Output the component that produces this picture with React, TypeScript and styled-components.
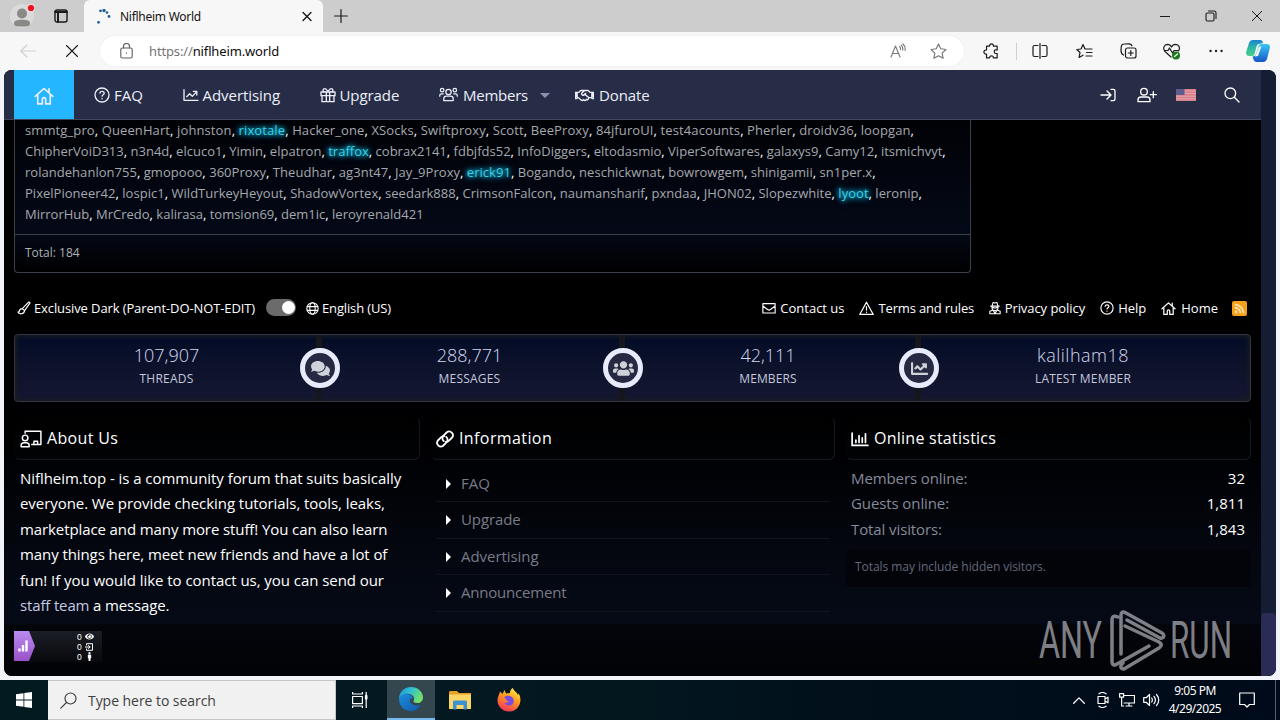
import React from 'react';
import styled, { createGlobalStyle } from 'styled-components';
import {
  FaChartLine,
  FaComments,
  FaEye,
  FaMale,
  FaRegHandshake,
  FaRss,
  FaUsers,
} from 'react-icons/fa';

const GlobalStyle = createGlobalStyle`
  * {
    box-sizing: border-box;
  }

  body {
    margin: 0;
    overflow: hidden;
    background: #f3f4fa;
    font-family: 'Open Sans', 'Noto Sans', sans-serif;
  }
`;

const Screen = styled.div`
  width: 1280px;
  height: 720px;
  display: flex;
  flex-direction: column;
`;

/* ---------- shared ---------- */

const Svg = styled.svg<{ $w?: number; $h?: number; $stroke?: number }>`
  width: ${p => p.$w || 16}px;
  height: ${p => p.$h || p.$w || 16}px;
  flex: none;
  display: block;
  fill: none;
  stroke: currentColor;
  stroke-width: ${p => p.$stroke || 2};
  stroke-linecap: round;
  stroke-linejoin: round;
`;

const Label = styled.span<{ $spacing?: number }>`
  white-space: nowrap;
  letter-spacing: ${p => p.$spacing || 0}px;
`;

const Slot = styled.div<{ $w: number; $color?: string }>`
  width: ${p => p.$w}px;
  height: 100%;
  flex: none;
  display: flex;
  align-items: center;
  justify-content: center;
  color: ${p => p.$color || '#1b1b1b'};
`;

const Spacer = styled.div`
  flex: 1;
`;

/* ---------- icons ---------- */

type IconProps = { size?: number };

const HomeIcon = ({ size = 16 }: IconProps) => (
  <Svg viewBox="0 0 24 24" $w={size}>
    <path d="M1.5 12.5 12 3l10.5 9.5M4.5 11v10.5H10V16a2 2 0 0 1 4 0v5.5h5.5V11M18 3.5v4" />
  </Svg>
);

const QuestionIcon = ({ size = 16 }: IconProps) => (
  <Svg viewBox="0 0 24 24" $w={size}>
    <circle cx="12" cy="12" r="10.5" />
    <path d="M8.8 9.2c.3-1.8 1.5-2.7 3.2-2.7 1.9 0 3.3 1 3.3 2.8 0 2.2-3.2 2.3-3.2 4.4M12 17.2v.4" />
  </Svg>
);

const ChartIcon = ({ size = 16 }: IconProps) => (
  <Svg viewBox="0 0 24 24" $w={size}>
    <path d="M1.5 4v16h21M5.5 14.5l4.5-4.5 4 4 6.5-7M15.5 6.5h5.2V12" />
  </Svg>
);

const GiftIcon = ({ size = 16 }: IconProps) => (
  <Svg viewBox="0 0 24 24" $w={size}>
    <path d="M1.5 7.5h21V13h-21zM3 13v9h18v-9M9.5 7.5V22M14.5 7.5V22M12 7.5C10 3 7.5 1.5 5.5 3s-.5 4.5 2 4.5M12 7.5C14 3 16.5 1.5 18.5 3s.5 4.5-2 4.5" />
  </Svg>
);

const GroupIcon = ({ size = 19 }: IconProps) => (
  <Svg viewBox="0 0 30 24" $w={size} $h={size * 0.8}>
    <circle cx="15" cy="8" r="4.2" />
    <circle cx="5" cy="5" r="2.8" />
    <circle cx="25" cy="5" r="2.8" />
    <path d="M7.5 21.5V19c0-3 2-4.5 4.5-4.5h6c2.5 0 4.5 1.500 4.500 4.500v2.500zM1.200 14.500v-1c0-1.700 1-2.700 2.800-2.700h2.800M28.800 14.500v-1c0-1.700-1-2.700-2.800-2.700h-2.800" />
  </Svg>
);

const LoginIcon = () => (
  <Svg viewBox="0 0 24 24" $w={16}>
    <path d="M1.5 12H16M10.500 6l6 6-6 6M16.500 3.500H20A2.500 2.500 0 0 1 22.500 6v12a2.500 2.500 0 0 1-2.500 2.500h-3.500" />
  </Svg>
);

const UserPlusIcon = () => (
  <Svg viewBox="0 0 30 24" $w={20} $h={16}>
    <circle cx="10.5" cy="7" r="5" />
    <path d="M1.5 22v-2.500c0-3 2-4.500 4.500-4.500h9c2.500 0 4.500 1.500 4.500 4.500V22zM24.500 7v9M20 11.500h9" />
  </Svg>
);

const SearchIcon = () => (
  <Svg viewBox="0 0 24 24" $w={16}>
    <circle cx="9.5" cy="9.5" r="8" />
    <path d="m15.500 15.500 7 7" />
  </Svg>
);

const FlagIcon = () => (
  <Svg viewBox="0 0 20 12" $w={20} $h={12}>
    <g stroke="none">
      <path fill="#d9808c" d="M0 0h20v12H0z" />
      <path fill="#e3a3ae" d="M8 1.500h12v1H8zM8 4h12v1H8zM0 6.800h20v1H0zM0 9.300h20v1H0z" />
      <path fill="#5d5c8c" d="M0 0h8.500v6H0z" />
    </g>
  </Svg>
);

const BrushIcon = () => (
  <Svg viewBox="0 0 24 24" $w={14}>
    <path d="M9 13 19.500 2.200c1.500-1.200 3.300.3 2.300 2L13 16.500M9 13c-3 0-4.500 1.500-4.800 4-.1 1.300-1 2-2.700 2 2 4 10.500 4.500 11.500-2.500zM9 13l4 3.500" />
  </Svg>
);

const GlobeIcon = () => (
  <Svg viewBox="0 0 24 24" $w={13}>
    <circle cx="12" cy="12" r="10.5" />
    <ellipse cx="12" cy="12" rx="5" ry="10.5" />
    <path d="M2.500 8.500h19M2.500 15.500h19" />
  </Svg>
);

const MailIcon = () => (
  <Svg viewBox="0 0 24 24" $w={14}>
    <path d="M1.500 4.500h21v16h-21zM1.500 8.500l8 6c1.500 1.200 3.500 1.200 5 0l8-6" />
  </Svg>
);

const WarnIcon = () => (
  <Svg viewBox="0 0 24 24" $w={15}>
    <path d="M12 2 22.800 21.500H1.200zM12 9v5.500M12 17.800v.3" />
  </Svg>
);

const SecretIcon = () => (
  <Svg viewBox="0 0 22 24" $w={12} $h={14}>
    <path d="M3 8.500h16M5.500 8.500 7.500 1.800 11 3l3.500-1.200 2 6.700M5.500 9v2.500a5.500 5.500 0 0 0 11 0V9M6 11h3.500v1.500M16 11h-3.500v1.500M6.500 16 1.500 18v4.500h19V18l-5-2M8.500 18l2.500 4.500L13.500 18" />
  </Svg>
);

const BoardIcon = () => (
  <Svg viewBox="0 0 30 24" $w={22} $h={18}>
    <circle cx="7" cy="10.5" r="3.8" />
    <path d="M1.500 22.500V21c0-2.500 1.500-4 4-4h3c2.500 0 4 1.500 4 4v1.500zM7 4V1.500h21.500v18H16M19 19v-4h5v4" />
  </Svg>
);

const ChainIcon = () => (
  <Svg viewBox="0 0 24 24" $w={18} $stroke={2.4}>
    <path d="M10.300 14.800A5 5 0 0 1 10 7.500L14.500 3a5 5 0 0 1 7 7l-4.500 4.500a5 5 0 0 1-4 1.300" />
    <path d="M13.700 9.200a5 5 0 0 1 .3 7.300L9.500 21a5 5 0 0 1-7-7L7 9.500a5 5 0 0 1 4-1.300" />
  </Svg>
);

const BarsIcon = () => (
  <Svg viewBox="0 0 24 24" $w={18}>
    <path d="M1.500 4v16.500h21M6.500 16.500v-3M10.700 16.500v-9M15 16.500v-6M19.300 16.500V5" strokeWidth="2.3" />
  </Svg>
);

/* ---------- browser tabs ---------- */

const TabBar = styled.div`
  height: 32px;
  flex: none;
  display: flex;
  background: #cdcdcd;
`;

const Tab = styled.div`
  width: 239px;
  height: 32px;
  margin-left: 7px;
  padding: 0 8px 0 12px;
  display: flex;
  align-items: center;
  background: #f7f7f7;
  border-radius: 6px 6px 0 0;
  font-family: 'Noto Sans', sans-serif;
  font-size: 12px;
  color: #111;

  svg {
    margin-right: 9px;
  }

  svg:last-child {
    margin: 0 0 0 auto;
  }
`;

const ToolBar = styled.div`
  height: 38px;
  flex: none;
  display: flex;
  align-items: center;
  padding-left: 6px;
  background: #f7f7f7;
`;

const AddressBar = styled.div`
  width: 864px;
  height: 30px;
  margin: 0 5px 0 6px;
  padding: 0 6px 0 10px;
  display: flex;
  align-items: center;
  background: #fff;
  border-radius: 15px;
  box-shadow: 0 0 2px #e8e8e8;
  font-family: 'Noto Sans', sans-serif;
  font-size: 13px;
  color: #0d0d0d;

  span span {
    color: #757575;
  }
`;

const Url = styled(Label)`
  margin-left: 7px;
`;

const Separator = styled.div`
  width: 1px;
  height: 17px;
  margin: 0 1px 0 3px;
  background: #cfcfcf;
`;

const BrowserChrome = () => (
  <>
    <TabBar>
      <Slot $w={44}>
        <Svg viewBox="0 0 26 26" $w={26}>
          <g stroke="none">
            <circle cx="13" cy="13" r="12" fill="#dadada" />
            <circle cx="13" cy="10.5" r="5" fill="#8b8986" />
            <path d="M5 20.500c0-3 3-3.700 8-3.700s8 .7 8 3.700-3 3-8 3-8 0-8-3z" fill="#8b8986" />
            <circle cx="22" cy="5" r="4.5" fill="#eed5d5" />
            <circle cx="22" cy="5" r="3.1" fill="#e3141c" />
          </g>
        </Svg>
      </Slot>
      <Slot $w={33}>
        <Svg viewBox="0 0 14 14" $w={14} $stroke={1.4}>
          <rect x="1" y="1" width="12" height="12" rx="2" />
          <path d="M1 3h12M4 4v9" strokeWidth="2" />
        </Svg>
      </Slot>
      <Tab>
        <Svg viewBox="0 0 15 15" $w={15}>
          <g stroke="none" fill="#1f5e9c">
            <circle cx="4.5" cy="1.8" r="1.4" />
            <circle cx="8" cy="1.6" r="1.7" />
            <circle cx="11" cy="3.5" r="1.3" />
            <circle cx="13" cy="7.5" r="1.4" />
            <circle cx="2.5" cy="13.3" r="1.4" />
          </g>
        </Svg>
        <Label $spacing={-0.27}>Niflheim World</Label>
        <Svg viewBox="0 0 16 16" $w={16} $stroke={1.3}>
          <path d="m4 4.500 8 8M12 4.500l-8 8" />
        </Svg>
      </Tab>
      <Slot $w={35}>
        <Svg viewBox="0 0 14 14" $w={14} $stroke={1.2}>
          <path d="M7 .6v12.800M.6 7h12.800" />
        </Svg>
      </Slot>
      <Spacer />
      <Slot $w={46}>
        <Svg viewBox="0 0 10 10" $w={10} $stroke={1}>
          <path d="M0 5.500h10" />
        </Svg>
      </Slot>
      <Slot $w={46}>
        <Svg viewBox="0 0 12 12" $w={12} $stroke={1.1}>
          <rect x="1" y="3" width="8" height="8" rx="1.5" />
          <path d="M3.500 1H9a2 2 0 0 1 2 2v5.500" />
        </Svg>
      </Slot>
      <Slot $w={46}>
        <Svg viewBox="0 0 10 10" $w={10} $stroke={1}>
          <path d="m0 0 10 10M10 0 0 10" />
        </Svg>
      </Slot>
    </TabBar>
    <ToolBar>
      <Slot $w={44} $color="#cfcfcf">
        <Svg viewBox="0 0 16 14" $w={16} $h={14} $stroke={1.1}>
          <path d="M15.500 7H.7M7 1 .7 7 7 13" />
        </Svg>
      </Slot>
      <Slot $w={44}>
        <Svg viewBox="0 0 12 12" $w={12} $stroke={1.1}>
          <path d="m.5.5 11 11M11.500.5l-11 11" />
        </Svg>
      </Slot>
      <AddressBar>
        <Slot $w={32} $color="#5f5f5f">
          <Svg viewBox="0 0 13 16" $w={13} $h={16} $stroke={1.1}>
            <rect x=".8" y="5" width="11.4" height="10" rx="1.5" />
            <path d="M3.500 5V3.500a3 3 0 0 1 6 0V5M6.500 9.800v.4" />
          </Svg>
        </Slot>
        <Url $spacing={-0.14}>
          <span>https://</span>niflheim.world
        </Url>
        <Spacer />
        <Slot $w={40} $color="#767676">
          <Svg viewBox="0 0 16 16" $w={16} $stroke={1.1}>
            <path d="M1 14 5.500 3 10 14M2.600 10.500h5.800M9.500 3.500c1 .9 1.200 2 1 3.200M11.200 2.200c1.500 1.400 1.900 3 1.500 5M13 1c1.800 1.700 2.500 4 2 6.500" />
          </Svg>
        </Slot>
        <Slot $w={40} $color="#767676">
          <Svg viewBox="0 0 24 24" $w={17} $stroke={1.6}>
            <path d="m12 1.500 3.200 6.700 7.300 1-5.300 5.100 1.300 7.300L12 18.100l-6.500 3.500 1.300-7.300L1.500 9.200l7.300-1z" />
          </Svg>
        </Slot>
      </AddressBar>
      <Slot $w={44}>
        <Svg viewBox="0 0 24 24" $w={17} $stroke={1.7}>
          <path d="M5 4.500h4.300c-.6-4.300 6-4.300 5.400 0H20v5.300h-2c-2.800 0-2.800 5 0 5H20V21h-5.300c.5-3.800-5.900-3.800-5.400 0H5v-5.300c-5 .6-5-6.400 0-5.800z" />
        </Svg>
      </Slot>
      <Separator />
      <Slot $w={44}>
        <Svg viewBox="0 0 16 16" $w={16} $stroke={1.2}>
          <path d="M6 2.500H2.500A1.500 1.500 0 0 0 1 4v8a1.500 1.500 0 0 0 1.500 1.500H6M10 2.500h3.500A1.500 1.500 0 0 1 15 4v8a1.500 1.500 0 0 1-1.500 1.500H10M8 .5v15" />
        </Svg>
      </Slot>
      <Slot $w={44}>
        <Svg viewBox="0 0 17 16" $w={17} $h={16} $stroke={1.2}>
          <path d="M9 6 7 1.500 5 6 .8 6.500 4 9.500l-.9 5L7 12.200M9 6h7M10.500 9.500H16M10 13h6" />
        </Svg>
      </Slot>
      <Slot $w={44}>
        <Svg viewBox="0 0 17 16" $w={17} $h={16} $stroke={1.2}>
          <rect x="5.5" y="5" width="10.5" height="10" rx="2" />
          <path d="M10.800 7.500v5M8.300 10h5M3.500 12C1.500 11 1 9 1 7l.3-3.500C1.500 2 2.500 1 4 1l5-.2c1.500 0 2.500.7 3 2" />
        </Svg>
      </Slot>
      <Slot $w={44}>
        <Svg viewBox="0 0 18 17" $w={18} $h={17} $stroke={1.2}>
          <path d="M8 14 2 8.500C-.5 5.500 1 1.500 4.500 1.300 6.500 1.300 8 3 8.500 4 9 3 10.500 1.300 12.500 1.300 16 1.500 17.500 5 15.500 8M1.500 7.500H5L6.500 5l3 5L11 7.500h4" />
          <circle cx="13" cy="12.5" r="4" fill="#187a1c" stroke="none" />
          <path d="m11.500 13.500 3-2.500" stroke="#fff" />
        </Svg>
      </Slot>
      <Slot $w={44}>
        <Svg viewBox="0 0 14 4" $w={14} $h={4} $stroke={2.3}>
          <path d="M1.500 2h.1M7 2h.1M12.500 2h.1" />
        </Svg>
      </Slot>
      <Slot $w={40}>
        <Svg viewBox="0 0 24 22" $w={24} $h={22}>
          <defs>
            <linearGradient id="cpA" x1="0" y1="0" x2="0" y2="1">
              <stop offset="0" stopColor="#1b7fd0" />
              <stop offset=".45" stopColor="#2bb6a8" />
              <stop offset="1" stopColor="#4bd08a" />
            </linearGradient>
            <linearGradient id="cpB" x1="0" y1="0" x2="0" y2="1">
              <stop offset="0" stopColor="#39c8f2" />
              <stop offset="1" stopColor="#1557c8" />
            </linearGradient>
          </defs>
          <g stroke="none">
            <path fill="url(#cpA)" d="M7 0h7c2 0 2.500 1 3 3l-4 1c-1.500 0-2 1-2.500 2.500L8.500 14c-.5 1.500-1.300 2-3 2H3c-2.500 0-3.500-2-2.700-4.500L3 3c.7-2 2-3 4-3z" />
            <path fill="url(#cpB)" d="M17 22h-6c-2 0-3-1-3.700-3L6.500 16.500c2-.2 3-1 3.500-2.500l2.700-8c.5-1.500 1.500-2 3-2H21c2.500 0 3.500 2 2.700 4.500L21 19c-.7 2-2 3-4 3z" />
            <path fill="#f1f7fb" d="m13 7 2.500-1-3.500 10-3 .5z" />
          </g>
        </Svg>
      </Slot>
    </ToolBar>
  </>
);

/* ---------- forum page ---------- */

const PageFrame = styled.div`
  height: 610px;
  flex: none;
  padding: 0 4px 4px;
  background: #f3f4fa;
`;

const Page = styled.div`
  position: relative;
  height: 606px;
  display: flex;
  overflow: hidden;
  border-radius: 8px;
  background: #000;
  font-size: 15px;
  color: #fff;
`;

const Content = styled.div`
  width: 1257px;
  display: flex;
  flex-direction: column;
  background: linear-gradient(
    #000 0,
    #000002 370px,
    #04070f 480px,
    #050a16 553px,
    #03050b 555px,
    #020306 100%
  );
`;

const Scrollbar = styled.div`
  width: 15px;
  padding-top: 543px;
  background: #141d33;
`;

const Thumb = styled.div`
  height: 63px;
  background: #2a2c55;
  border-radius: 4px 4px 0 0;
`;

const Nav = styled.nav`
  height: 50px;
  flex: none;
  display: flex;
  align-items: center;
  padding-left: 10px;
  background: #282d47;
  border-bottom: 1px solid #42465a;
  color: #eceef9;
`;

const HomeTab = styled.div`
  width: 60px;
  height: 49px;
  display: flex;
  align-items: center;
  justify-content: center;
  padding-top: 3px;
  background: #24b6ff;
`;

const NavItem = styled.div<{ $w: number; $gap?: number }>`
  width: ${p => p.$w}px;
  padding: 1px 0 0 20px;
  display: flex;
  align-items: center;
  gap: ${p => p.$gap || 4}px;
`;

const Caret = styled.i`
  margin-left: 7px;
  border: 5px solid transparent;
  border-top-color: #8d90ac;
  border-bottom: 0;
`;

const NavTools = styled.div`
  flex: 1;
  height: 100%;
  display: flex;
  justify-content: flex-end;
  padding-right: 3px;
`;

const MembersBox = styled.section`
  width: 957px;
  height: 153px;
  flex: none;
  margin-left: 10px;
  border: 1px solid #3a404c;
  border-top: 0;
  border-radius: 0 0 4px 4px;
  background: linear-gradient(#010206, #040917 110px, #000 100%);
  font-size: 13px;
`;

const NameList = styled.div`
  height: 115px;
  padding-left: 10px;
  border-bottom: 1px solid #3a404c;
`;

const NameRow = styled.div<{ $spacing: number }>`
  height: 21px;
  line-height: 21px;
  white-space: nowrap;
  letter-spacing: ${p => p.$spacing}px;
`;

const Name = styled.span<{ $glow?: boolean }>`
  color: ${p => (p.$glow ? '#3fd0e6' : '#a5a8ad')};
  text-shadow: ${p =>
    p.$glow ? '0 0 4px #00b4d8, 0 0 6px #00b4d8, 0 0 9px #0a6a8a' : 'none'};
`;

const Total = styled.div`
  height: 36px;
  line-height: 36px;
  padding-left: 10px;
  font-size: 12px;
  color: #aeb1b8;
`;

// a leading * marks the highlighted members
const nameRows = [
  {
    spacing: 0.11,
    names:
      'smmtg_pro QueenHart johnston *rixotale Hacker_one XSocks Swiftproxy Scott BeeProxy 84jfuroUI test4acounts Pherler droidv36 loopgan',
  },
  {
    spacing: 0.01,
    names:
      'ChipherVoiD313 n3n4d elcuco1 Yimin elpatron *traffox cobrax2141 fdbjfds52 InfoDiggers eltodasmio ViperSoftwares galaxys9 Camy12 itsmichvyt',
  },
  {
    spacing: 0.035,
    names:
      'rolandehanlon755 gmopooo 360Proxy Theudhar ag3nt47 Jay_9Proxy *erick91 Bogando neschickwnat bowrowgem shinigamii sn1per.x',
  },
  {
    spacing: 0.025,
    names:
      'PixelPioneer42 lospic1 WildTurkeyHeyout ShadowVortex seedark888 CrimsonFalcon naumansharif pxndaa JHON02 Slopezwhite *lyoot leronip',
  },
  {
    spacing: 0,
    names: 'MirrorHub MrCredo kalirasa tomsion69 dem1ic leroyrenald421',
  },
];

const OnlineMembers = () => (
  <MembersBox>
    <NameList>
      {nameRows.map((row, r) => {
        const names = row.names.split(' ');
        return (
          <NameRow key={r} $spacing={row.spacing}>
            {names.map((name, i) => (
              <React.Fragment key={name}>
                <Name $glow={name[0] === '*'}>{name.replace('*', '')}</Name>
                {r === nameRows.length - 1 && i === names.length - 1 ? '' : ', '}
              </React.Fragment>
            ))}
          </NameRow>
        );
      })}
    </NameList>
    <Total>
      <Label>Total: 184</Label>
    </Total>
  </MembersBox>
);

const FooterBar = styled.div`
  height: 61px;
  flex: none;
  display: flex;
  align-items: center;
  padding: 9px 14px 0 13px;
  font-size: 13px;
`;

const FooterLink = styled.div<{ $gap: number; $ml?: number }>`
  display: flex;
  align-items: center;
  gap: ${p => p.$gap}px;
  margin-left: ${p => p.$ml || 0}px;
`;

const Toggle = styled.div`
  width: 30px;
  height: 17px;
  margin: -2px 10px 0 11px;
  padding: 2px 1px;
  display: flex;
  justify-content: flex-end;
  border-radius: 9px;
  background: #6b6b6b;

  &::after {
    content: '';
    width: 13px;
    height: 13px;
    border-radius: 50%;
    background: #fff;
  }
`;

const Feed = styled.div`
  width: 15px;
  height: 15px;
  margin-left: 14px;
  display: flex;
  align-items: center;
  justify-content: center;
  border-radius: 2px;
  background: #f7a11b;
  color: #fde3b0;
`;

const StatsBar = styled.div`
  width: 1237px;
  height: 68px;
  flex: none;
  margin-left: 10px;
  display: grid;
  grid-template-columns: 285px 40px 263px 40px 256px 40px 1fr;
  align-items: stretch;
  border: 1px solid #33363f;
  border-radius: 4px;
  background: linear-gradient(#020b26, #0d122b 45%, #141731);
  box-shadow: inset 0 0 4px 2px #191c22;
`;

const Stat = styled.div<{ $shift: number; $spacing?: number }>`
  display: flex;
  flex-direction: column;
  align-items: center;
  padding-top: 7px;
  padding-left: ${p => Math.max(p.$shift * 2, 0)}px;
  padding-right: ${p => Math.max(-p.$shift * 2, 0)}px;
  color: #d3d8ee;
  font-size: 18px;
  font-weight: 300;
  line-height: 26px;

  small {
    margin-top: 1px;
    font-size: 12px;
    font-weight: 400;
    line-height: 20px;
    letter-spacing: ${p => p.$spacing || 0}px;
    color: #c3c8dc;
  }
`;

const Node = styled.div`
  display: flex;
  align-items: center;
  justify-content: center;
  background: linear-gradient(90deg, transparent 16px, #16171c 16px, #16171c 22px, transparent 22px);
`;

const Ring = styled.div`
  width: 40px;
  height: 40px;
  display: flex;
  align-items: center;
  justify-content: center;
  border: 5px solid #e8ebfb;
  border-radius: 50%;
  background: #252a42;
  color: #cfd2d9;
`;

const Columns = styled.div`
  flex: 1;
  display: grid;
  grid-template-columns: 406px 404px 405px;
  gap: 11px;
  padding: 15px 0 0 10px;
`;

const Block = styled.div`
  line-height: 25.5px;
`;

const BlockTitle = styled.h3<{ $indent?: number }>`
  height: 43px;
  margin: 0 0 5.9px;
  padding: 0 0 0 ${p => p.$indent || 4}px;
  display: flex;
  align-items: center;
  gap: 5px;
  font-size: 16px;
  font-weight: 400;
  border: 1px solid #15191f;
  border-top-color: transparent;
  border-left-color: transparent;
  border-radius: 6px;
  background: linear-gradient(#000, #010306);
`;

const Line = styled.div<{ $spacing: number }>`
  padding-left: 6px;
  white-space: nowrap;
  letter-spacing: ${p => p.$spacing}px;

  em {
    font-style: normal;
    color: #c6cbe2;
  }
`;

const LinkRow = styled.div`
  height: 36.5px;
  margin: 0 5px;
  padding-left: 10px;
  display: flex;
  align-items: center;
  gap: 10px;
  border-bottom: 1px solid #10141c;
  color: #787c88;

  &::before {
    content: '';
    border: 5px solid transparent;
    border-left-color: #fff;
    border-right: 0;
  }
`;

const CountRow = styled.div`
  display: flex;
  justify-content: space-between;
  padding: 0 6px 0 5px;
  color: #868a99;

  b {
    font-weight: 400;
    color: #fff;
  }
`;

const Note = styled.div`
  height: 38px;
  margin-top: 7px;
  padding: 0 9px;
  line-height: 36px;
  border-radius: 4px;
  background: #02040a;
  font-size: 12px;
  color: #646878;
`;

const Counter = styled.div`
  width: 88px;
  height: 31px;
  flex: none;
  margin: 0 0 14px 10px;
  display: flex;
  justify-content: space-between;
  padding-right: 8px;
  background: linear-gradient(#1b1e26, #08090c);
`;

const CounterLogo = styled.div`
  width: 21px;
  height: 30px;
  display: flex;
  align-items: center;
  padding-left: 4px;
  background: linear-gradient(#b98bf0, #9a50c8);
  clip-path: polygon(0 0, 15px 0, 100% 50%, 15px 100%, 0 100%);
`;

const CounterValues = styled.div`
  display: flex;
  flex-direction: column;
  justify-content: center;
  font-family: 'Liberation Sans', sans-serif;
  font-size: 8.5px;
  line-height: 10px;

  div {
    width: 17px;
    height: 10px;
    display: flex;
    align-items: center;
    gap: 3px;
  }
`;

// sits over the bottom right corner of the page
const Watermark = styled.svg`
  position: absolute;
  right: 36px;
  bottom: 1px;
  width: 202px;
  height: 66px;
  overflow: visible;
  opacity: 0.62;
  font-family: Roboto, sans-serif;
`;

const aboutLines = [
  { text: 'Niflheim.top - is a community forum that suits basically', spacing: -0.055 },
  { text: 'everyone. We provide checking tutorials, tools, leaks,', spacing: -0.06 },
  { text: 'marketplace and many more stuff! You can also learn', spacing: -0.1 },
  { text: 'many things here, meet new friends and have a lot of', spacing: -0.085 },
  { text: 'fun! If you would like to contact us, you can send our', spacing: -0.055 },
];

const links = [
  { text: 'FAQ', spacing: 0 },
  { text: 'Upgrade', spacing: -0.1 },
  { text: 'Advertising', spacing: -0.05 },
  { text: 'Announcement', spacing: -0.2 },
];

const counts = [
  ['Members online:', '32'],
  ['Guests online:', '1,811'],
  ['Total visitors:', '1,843'],
];

const Forum = () => (
  <PageFrame>
    <Page>
      <Content>
        <Nav>
          <HomeTab>
            <HomeIcon size={20} />
          </HomeTab>
          <NavItem $w={88.5}>
            <QuestionIcon />
            <Label>FAQ</Label>
          </NavItem>
          <NavItem $w={137}>
            <ChartIcon />
            <Label $spacing={-0.05}>Advertising</Label>
          </NavItem>
          <NavItem $w={119.5}>
            <GiftIcon />
            <Label $spacing={-0.08}>Upgrade</Label>
          </NavItem>
          <NavItem $w={136} $gap={5}>
            <GroupIcon />
            <Label $spacing={-0.25}>Members</Label>
            <Caret />
          </NavItem>
          <NavItem $w={120} $gap={5}>
            <FaRegHandshake size={19} />
            <Label $spacing={-0.1}>Donate</Label>
          </NavItem>
          <NavTools>
            <Slot $w={38} $color="#fff">
              <LoginIcon />
            </Slot>
            <Slot $w={39} $color="#fff">
              <UserPlusIcon />
            </Slot>
            <Slot $w={39}>
              <FlagIcon />
            </Slot>
            <Slot $w={53} $color="#fff">
              <SearchIcon />
            </Slot>
          </NavTools>
        </Nav>
        <OnlineMembers />
        <FooterBar>
          <FooterLink $gap={3}>
            <BrushIcon />
            <Label $spacing={-0.11}>Exclusive Dark (Parent-DO-NOT-EDIT)</Label>
          </FooterLink>
          <Toggle />
          <FooterLink $gap={3}>
            <GlobeIcon />
            <Label $spacing={-0.15}>English (US)</Label>
          </FooterLink>
          <Spacer />
          <FooterLink $gap={4}>
            <MailIcon />
            <Label>Contact us</Label>
          </FooterLink>
          <FooterLink $gap={5} $ml={14}>
            <WarnIcon />
            <Label $spacing={-0.16}>Terms and rules</Label>
          </FooterLink>
          <FooterLink $gap={4} $ml={14.5}>
            <SecretIcon />
            <Label $spacing={-0.06}>Privacy policy</Label>
          </FooterLink>
          <FooterLink $gap={4} $ml={15}>
            <QuestionIcon size={14} />
            <Label>Help</Label>
          </FooterLink>
          <FooterLink $gap={5} $ml={15}>
            <HomeIcon size={15} />
            <Label>Home</Label>
          </FooterLink>
          <Feed>
            <FaRss size={11} />
          </Feed>
        </FooterBar>
        <StatsBar>
          <Stat $shift={9} $spacing={0.25}>
            <Label>107,907</Label>
            <small>THREADS</small>
          </Stat>
          <Node>
            <Ring>
              <FaComments size={19} />
            </Ring>
          </Node>
          <Stat $shift={-2} $spacing={0.2}>
            <Label>288,771</Label>
            <small>MESSAGES</small>
          </Stat>
          <Node>
            <Ring>
              <FaUsers size={21} />
            </Ring>
          </Node>
          <Stat $shift={-3} $spacing={0.1}>
            <Label>42,111</Label>
            <small>MEMBERS</small>
          </Stat>
          <Node>
            <Ring>
              <FaChartLine size={17} />
            </Ring>
          </Node>
          <Stat $shift={-11.5} $spacing={0.2}>
            <Label $spacing={0.5}>kalilham18</Label>
            <small>LATEST MEMBER</small>
          </Stat>
        </StatsBar>
        <Columns>
          <Block>
            <BlockTitle $indent={5}>
              <BoardIcon />
              <Label $spacing={0.35}>About Us</Label>
            </BlockTitle>
            {aboutLines.map(line => (
              <Line key={line.text} $spacing={line.spacing}>
                {line.text}
              </Line>
            ))}
            <Line $spacing={-0.15}>
              <em>staff team</em> a message.
            </Line>
          </Block>
          <Block>
            <BlockTitle>
              <ChainIcon />
              <Label $spacing={0.4}>Information</Label>
            </BlockTitle>
            {links.map(link => (
              <LinkRow key={link.text}>
                <Label $spacing={link.spacing}>{link.text}</Label>
              </LinkRow>
            ))}
          </Block>
          <Block>
            <BlockTitle>
              <BarsIcon />
              <Label $spacing={0.25}>Online statistics</Label>
            </BlockTitle>
            {counts.map(([name, value]) => (
              <CountRow key={name}>
                <Label $spacing={-0.1}>{name}</Label>
                <b>{value}</b>
              </CountRow>
            ))}
            <Note>
              <Label $spacing={-0.05}>Totals may include hidden visitors.</Label>
            </Note>
          </Block>
        </Columns>
        <Counter>
          <CounterLogo>
            <Svg viewBox="0 0 10 12" $w={10} $h={12} $stroke={2.4}>
              <path d="M1.500 11.500V8.500M5 11.500V5M8.500 11.500V.5" strokeLinecap="butt" />
            </Svg>
          </CounterLogo>
          <CounterValues>
            <div>
              0 <FaEye size={9} />
            </div>
            <div>
              0{' '}
              <Svg viewBox="0 0 8 8" $w={8} $stroke={1}>
                <path d="M1.500 2V.7h6v6.600h-6V6M0 4h5M3.500 2.500 5 4 3.500 5.500" />
              </Svg>
            </div>
            <div>
              0 <FaMale size={9} />
            </div>
          </CounterValues>
        </Counter>
      </Content>
      <Scrollbar>
        <Thumb />
      </Scrollbar>
      <Watermark viewBox="0 0 202 66">
        <g fill="#c9cbd0">
          <text x="1" y="49" fontSize="52" textLength="63" lengthAdjust="spacingAndGlyphs">
            ANY
          </text>
          <text x="132" y="49" fontSize="52" textLength="62" lengthAdjust="spacingAndGlyphs">
            RUN
          </text>
        </g>
        <g fill="none" stroke="#c9cbd0" strokeWidth="3.5" strokeLinecap="round" strokeLinejoin="round">
          <path d="M80 8c-5-2-6 0-6 3v41c0 4 2 5 5 3l32-18" />
          <path d="M83 45V6c0-3 2-4 5-2l36 20c3 2 2 6-2 5L89 11" />
          <path d="M87 17l34 16c3 2 3 4 0 6L86 60c-4 0-4-4-1-6" />
        </g>
      </Watermark>
    </Page>
  </PageFrame>
);

/* ---------- taskbar ---------- */

const Bar = styled.footer`
  height: 40px;
  flex: none;
  display: flex;
  background: linear-gradient(90deg, #031a21, #03171f 50%, #01101b 65%, #000a1a);
  color: #fff;
`;

const SearchBox = styled.div`
  width: 288px;
  height: 40px;
  display: flex;
  align-items: center;
  gap: 11px;
  padding-left: 12px;
  background: #f1f1f1;
  border: 1px solid #c5c8c9;
  border-left: 0;
  font-size: 14px;
  color: #3f3f3f;
`;

const ActiveApp = styled.div`
  width: 48px;
  margin-left: 3px;
  display: flex;
  align-items: center;
  justify-content: center;
  background: #34464e;
  border-bottom: 2px solid #76b9ed;
`;

const Clock = styled.div`
  width: 62px;
  margin-left: 1px;
  padding-top: 2px;
  font-family: 'Noto Sans', sans-serif;
  font-size: 12px;
  line-height: 18px;
  text-align: center;
  white-space: nowrap;
  letter-spacing: -0.5px;
`;

const ShowDesktop = styled.div`
  width: 5px;
  margin-left: 7px;
  border-left: 1px solid #56606b;
`;

const Taskbar = () => (
  <Bar>
    <Slot $w={48} $color="#fff">
      <Svg viewBox="0 0 16 16" $w={16}>
        <path fill="#fff" stroke="none" d="M0 2.300 7.500 1.200v6.400H0zM8.300 1.100 16 0v7.600H8.300zM0 8.400h7.500v6.400L0 13.700zM8.300 8.400H16V16l-7.700-1.100z" />
      </Svg>
    </Slot>
    <SearchBox>
      <Svg viewBox="0 0 17 17" $w={17} $stroke={1.2}>
        <circle cx="10.5" cy="6.5" r="5.5" />
        <path d="M6.500 10.500.8 16.200" />
      </Svg>
      <Label $spacing={-0.05}>Type here to search</Label>
    </SearchBox>
    <Slot $w={48} $color="#fff">
      <Svg viewBox="0 0 16 16" $w={16} $stroke={1.2}>
        <path d="M.6 4.500h9.800v7.200H.6zM.6 0v2h9.800V0M.6 16v-2h9.800v2M14.200 0v16" />
        <path d="M14.200 4v2.500" strokeWidth="2.6" />
      </Svg>
    </Slot>
    <ActiveApp>
      <Svg viewBox="0 0 24 24" $w={24}>
        <defs>
          <linearGradient id="edgeTop" x1="0" y1="0" x2="1" y2=".4">
            <stop offset="0" stopColor="#1c93d8" />
            <stop offset=".5" stopColor="#31bfd6" />
            <stop offset="1" stopColor="#6fe06a" />
          </linearGradient>
          <linearGradient id="edgeLow" x1="0" y1="0" x2="1" y2="1">
            <stop offset="0" stopColor="#1a8fdc" />
            <stop offset="1" stopColor="#1258ac" />
          </linearGradient>
        </defs>
        <g stroke="none">
          <path fill="url(#edgeLow)" d="M0 12C0 7 5 6 9 7c3 .7 5 2.500 5 5-2-1.500-3.500 0-3 2.500.8 3.500 5.500 5 10.500 3C19 22 16 24 12 24 5 24 0 19 0 12z" />
          <path fill="url(#edgeTop)" d="M0 12C0 5 5 0 12 0s12 5 12 10.500c0 3.500-2.500 5.500-5.500 5.500-3 0-4.500-1-4-2 1.500-2.500.5-6-4-7C6 6 1 7 0 12z" />
        </g>
      </Svg>
    </ActiveApp>
    <Slot $w={50}>
      <Svg viewBox="0 0 22 19" $w={22} $h={19}>
        <g stroke="none">
          <path fill="#e3a023" d="M0 1.500C0 .7.500 0 1.300 0H8l2 2h12v4H0z" />
          <path fill="#fbd667" d="M0 3.500h22V18H0z" />
          <path fill="#3c93cf" d="M4 11c0-1 .7-1.500 1.500-1.500h11c.8 0 1.500.5 1.500 1.500v7.500h-3.500V14h-7v4.500H4z" />
        </g>
      </Svg>
    </Slot>
    <Slot $w={48}>
      <Svg viewBox="0 0 24 24" $w={24}>
        <defs>
          <linearGradient id="fox" x1=".8" y1="0" x2=".3" y2="1">
            <stop offset="0" stopColor="#fff04a" />
            <stop offset=".45" stopColor="#ff9a1f" />
            <stop offset="1" stopColor="#f5315a" />
          </linearGradient>
        </defs>
        <g stroke="none">
          <path fill="url(#fox)" d="M1.500 8 3 3.500 5.500 6l2-4L9 5.500l4-.5c0-2.500 1-4 3-5 .5 3 4 4 5 7 .5-.5.500-1 .5-2 2.500 4 2.500 9 .5 12.500C20 21.500 16.500 23.500 12 23.500 5.500 23.500.5 18.500.5 12.500c0-2 .3-3 1-4.500z" />
          <path fill="#7a4be0" d="M7 9.500c2-2.500 6-2.500 8.500 0 2 2.500 1.500 6-1 7.500-3 1.500-6.500 0-7.200-2.500 1.500.7 3.200.5 4.700-1-2-.2-3-1.300-3-2.500z" />
        </g>
      </Svg>
    </Slot>
    <Spacer />
    <Slot $w={24} $color="#fff">
      <Svg viewBox="0 0 12 7" $w={12} $h={7} $stroke={1.3}>
        <path d="M.7 6.200 6 .9l5.300 5.300" />
      </Svg>
    </Slot>
    <Slot $w={24} $color="#fff">
      <Svg viewBox="0 0 12 16" $w={12} $h={16} $stroke={1.2}>
        <path d="M1 4.500h7v7H1zM8 7l3-1.800v5.600L8 9M2 1.800C4 .3 7 .3 9 1.800M2 14.200c2 1.500 5 1.500 7 0" />
      </Svg>
    </Slot>
    <Slot $w={24} $color="#fff">
      <Svg viewBox="0 0 16 14" $w={16} $h={14} $stroke={1.2}>
        <path d="M5.500 2.500h10v7.500H5M10 10v3M7 13h6M.6.6h4v3.600h-4zM2.600 4.200V13h2" />
      </Svg>
    </Slot>
    <Slot $w={24} $color="#fff">
      <Svg viewBox="0 0 17 14" $w={17} $h={14} $stroke={1.2}>
        <path d="M.7 4.700h2.500L6.500 1.500v11L3.200 9.300H.7zM8.700 5c.8 1.200.8 2.800 0 4M11 3.300c1.700 2.200 1.700 5.200 0 7.400M13.500 1.500c2.700 3.300 2.700 7.700 0 11" />
      </Svg>
    </Slot>
    <Clock>
      9:05 PM
      <br />
      4/29/2025
    </Clock>
    <Slot $w={42} $color="#fff">
      <Svg viewBox="0 0 16 16" $w={16} $stroke={1.2}>
        <path d="M.7 1h14.600v11.500h-4.800L8 15l-2.500-2.500H.7z" />
      </Svg>
    </Slot>
    <ShowDesktop />
  </Bar>
);

export default function App() {
  return (
    <Screen>
      <GlobalStyle />
      <BrowserChrome />
      <Forum />
      <Taskbar />
    </Screen>
  );
}
